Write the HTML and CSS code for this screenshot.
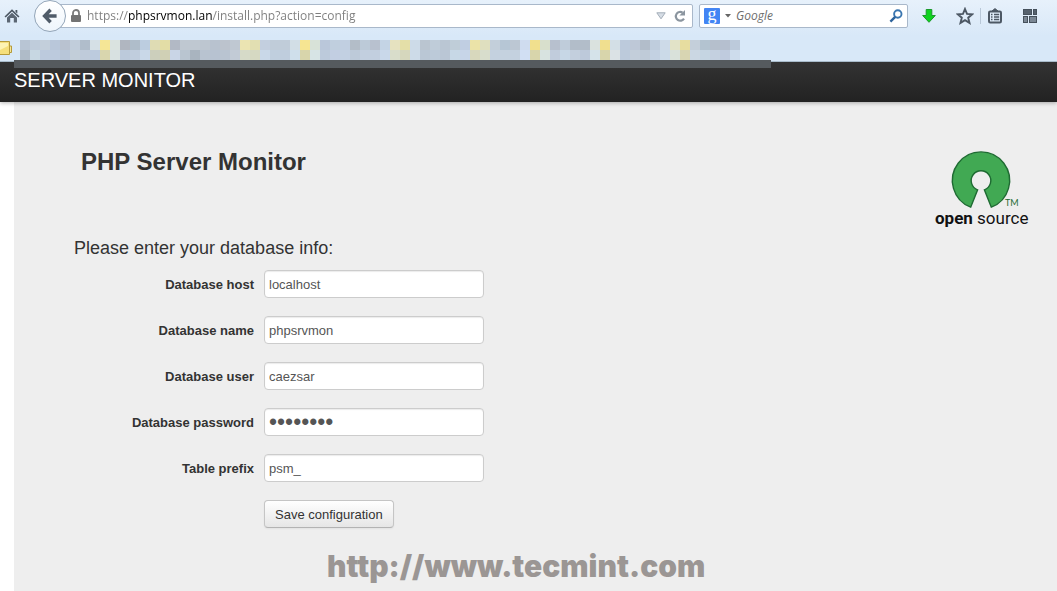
FILE: index.html
```html
<!DOCTYPE html>
<html lang="en">
<head>
  <meta charset="UTF-8">
  <title>SERVER MONITOR</title>
  <link rel="stylesheet" href="styles.css">
</head>
<body>

  <header class="browser">
    <div class="toolbar">
      <button class="icon-btn home" aria-label="Home">
        <svg width="16" height="16" viewBox="0 0 16 16">
          <path d="M0.5 8.5L8 1.2L15.5 8.5L14.3 9.6L8 3.6L1.7 9.6Z" fill="#4c5763"/>
          <path d="M3 9.4L8 4.8L13 9.4V14.5H9.8V10H6.2V14.5H3Z" fill="#5b6673"/>
          <path d="M11.5 2H13.3V5.5L11.5 4Z" fill="#4c5763"/>
        </svg>
      </button>
      <button class="back" aria-label="Back">
        <svg width="16" height="16" viewBox="0 0 16 16">
          <path d="M8.6 1.8L2.6 8L8.6 14.2M3 8H14.6" fill="none" stroke="#4f5b69" stroke-width="3.4"/>
        </svg>
      </button>
      <div class="address">
        <svg width="12" height="14" viewBox="0 0 12 14">
          <path d="M3 7V4a3 3 0 0 1 6 0V7" fill="none" stroke="#7b7b7b" stroke-width="1.8"/>
          <rect x="1" y="6" width="10" height="7" rx="1" fill="#737373"/>
        </svg>
        <input class="url" type="text" aria-label="Address" value="https://phpsrvmon.lan/install.php?action=config">
        <svg width="10" height="8" viewBox="0 0 10 8">
          <path d="M0.8 0.8H9.2L5 6.8Z" fill="#d6dde5" stroke="#a3adb8"/>
        </svg>
        <button class="icon-btn" aria-label="Reload">
          <svg width="14" height="14" viewBox="0 0 14 14">
            <path d="M11 9.6A4.4 4.4 0 1 1 9.6 3.6" fill="none" stroke="#8b959f" stroke-width="2.2"/>
            <path d="M12 1V6.6H6.4Z" fill="#8b959f"/>
          </svg>
        </button>
      </div>
      <div class="search">
        <span class="engine">g</span>
        <svg width="6" height="4" viewBox="0 0 6 4"><path d="M0 0H6L3 3.5Z" fill="#666"/></svg>
        <input class="query" type="text" aria-label="Search" placeholder="Google">
        <button class="icon-btn" aria-label="Go">
          <svg width="14" height="14" viewBox="0 0 14 14">
            <circle cx="8.8" cy="5" r="3.7" fill="none" stroke="#3a76b0" stroke-width="1.9"/>
            <path d="M6.2 7.8L1.4 12.6" stroke="#2d639c" stroke-width="2.4"/>
          </svg>
        </button>
      </div>
      <div class="tools">
        <button class="icon-btn" aria-label="Downloads">
          <svg width="16" height="16" viewBox="0 0 16 16">
            <path d="M5.2 1.5H10.8V7.5H14.3L8 14.3L1.7 7.5H5.2Z" fill="#0fd31f" stroke="#1c9a2c"/>
          </svg>
        </button>
        <button class="icon-btn star" aria-label="Bookmark">
          <svg width="18" height="18" viewBox="0 0 18 18">
            <path d="M9 2L11 6.9L16.2 7.3L12.2 10.7L13.5 15.9L9 13.1L4.5 15.9L5.8 10.7L1.8 7.3L7 6.9Z" fill="none" stroke="#4d5864" stroke-width="1.9"/>
          </svg>
        </button>
        <button class="icon-btn list" aria-label="Bookmarks">
          <svg width="16" height="16" viewBox="0 0 16 16">
            <rect x="2" y="3.5" width="12" height="11" rx="1.2" fill="none" stroke="#4d5864" stroke-width="2"/>
            <path d="M5 3L8 0.6L11 3Z" fill="#4d5864" stroke="#4d5864"/>
            <path d="M4 6.5H5.5M4 9H5.5M4 11.5H5.5M7 6.5H12.2M7 9H12.2M7 11.5H12.2" stroke="#4d5864" stroke-width="1.4"/>
          </svg>
        </button>
        <button class="icon-btn tiles" aria-label="Tab groups">
          <svg width="16" height="16" viewBox="0 0 16 16" stroke="#46515c">
            <rect x="1.5" y="1.5" width="8" height="5" fill="#56616d"/>
            <rect x="11.5" y="1.5" width="3" height="5" fill="#56616d"/>
            <rect x="1.5" y="8.5" width="4" height="6" fill="#7b8794"/>
            <rect x="7.5" y="8.5" width="7" height="6" fill="#7b8794"/>
          </svg>
        </button>
      </div>
    </div>
    <div class="bookmarks">
      <svg class="folder" width="14" height="18" viewBox="0 0 14 18">
        <path d="M9 6H11.5V12.5H9Z" fill="#f6e79a" stroke="#b59a3b"/>
        <path d="M-1 1.5H9.5V14.5H-1Z" fill="#f5df7c" stroke="#b59a3b"/>
        <path d="M0 3H8V6L0 10Z" fill="#fdf3b4"/>
      </svg>
      <div class="mosaic" id="mosaic">
        <!-- Tiles go here -->
      </div>
      <div class="strip"></div>
    </div>
  </header>

  <nav class="navbar">
    <a class="brand" href="#">SERVER MONITOR</a>
  </nav>

  <main class="content">
    <div class="page-header">
      <h1>PHP Server Monitor</h1>
      <svg class="logo" width="96" height="83" viewBox="0 0 96 83" role="img" aria-label="open source">
        <path d="M37.7 61.2A28.6 28.6 0 1 1 58.3 61.2L51.4 43.8A9.8 9.8 0 1 0 44.6 43.8Z" fill="#41a953" stroke="#1e6b32" stroke-width="1.4"/>
        <text class="logo-tm" x="72" y="60">TM</text>
        <text class="logo-text" x="2" y="78"><tspan class="logo-open">open</tspan> source</text>
      </svg>
    </div>

    <form class="config">
      <h2>Please enter your database info:</h2>
      <div class="row">
        <label for="host">Database host</label>
        <input type="text" id="host" value="localhost">
      </div>
      <div class="row">
        <label for="name">Database name</label>
        <input type="text" id="name" value="phpsrvmon">
      </div>
      <div class="row">
        <label for="user">Database user</label>
        <input type="text" id="user" value="caezsar">
      </div>
      <div class="row">
        <label for="pass">Database password</label>
        <input type="password" id="pass" value="password">
      </div>
      <div class="row">
        <label for="prefix">Table prefix</label>
        <input type="text" id="prefix" value="psm_">
      </div>
      <button class="save" type="submit">Save configuration</button>
    </form>

    <p class="watermark">http://www.tecmint.com</p>
  </main>

  <script>
    // two rows of tiles, left to right
    const rows = [
      'b8c5d4 bfccdb c3cfdb b9c7da b9c2d0 c1cddb b0bdcb d5e0e6 f5e696 dae3e0 b0b6c0 afbdca bccde0 dfdcb4 e3dda6 b2b9c5 bfc8d1 bfc8d1 bdc6d0 b8c2cf bcc3cd bfc8d2 ebe4b2 e2dfb2 c3cfdf c0ccd9 c0ccd9 d2dee6 f6e592 d8e2d8 bac7da c0cfde c1cfe1 b3bdc8 bccad8 b8c1cf c4d4e5 e6e2c0 e4dfa8 cddbe8 bac5d0 bfccd9 bac6d3 bfcdd8 c0cee2 ebe3a8 dfdfbf c3cfda b6c6d5 bcc7d3 cfdcef f1e08e d8dfcc b7c0ce bfccda b2bdc9 b2bdc9 dae2df f0df8f d3dfe6 bccadc bec8d7 b2bdca bfcddd cddae8 e2e3c8 e7dda0 c4cfda b3c3d0 b5bfcc b5bfcf bccadb',
      'afbbc8 c7d7e2 bccadd bccadd b8c6d8 c2ced9 bfcbda bccbde d9d6ae d8e1e1 bccadb c0cddd c9d8e8 cccfbc d0d0b5 c9d5e6 b9c5d0 a9b4bf b8c3d0 b7c2d1 b9c4d1 c2cbd6 d6dac8 d6d9c2 c9d8e8 c0cfde bfcddd cfdfeb d8d5ab d7e4e5 bccadb c2cee2 c2d0e2 bdcad9 c2cfdf c2cfdf c9d8ea d9ddcb d6d7bd cddbe8 bac7d5 bccad9 bac6d5 c7d8e6 c7d5e8 d8d8bd d8ddcc c4d1df c5d2df c4d1df d1dff3 d8d5ab d8e3e0 c1ccdc c7d7e6 c3cfdd bdc9da d5e3ea d8d5ab dbe2e5 bccadb c3ceda bfcbd8 c3d1e2 cbdae8 d9e1da d8d5b2 cbd7e3 c5d5e2 c4d0e0 bfcbde cddcec'
    ];

    const mosaic = document.getElementById('mosaic');
    rows.join(' ').split(' ').forEach(color => {
      const tile = document.createElement('span');
      tile.style.background = `#${color}`;
      mosaic.appendChild(tile);
    });
  </script>

</body>
</html>
```
FILE: styles.css
```css
* {
  box-sizing: border-box;
}

body {
  margin: 0;
  min-height: 100vh;
  display: flex;
  flex-direction: column;
  font-family: "Liberation Sans", Arial, sans-serif;
  font-size: 13px;
  line-height: 20px;
  color: #333;
  background: #fff;
}

button, input {
  font-family: inherit;
  font-size: inherit;
}

/* Browser */
.browser {
  position: relative;
  z-index: 2;
  background: linear-gradient(#e7f1fb, #d8e8f8 36px);
  border-bottom: 1px solid #a9bccb;
}

.toolbar {
  display: flex;
  align-items: center;
  height: 31px;
}

.icon-btn {
  display: flex;
  padding: 0;
  border: 0;
  background: none;
}

.home {
  margin: 0 14px 0 4px;
}

.back {
  display: flex;
  align-items: center;
  justify-content: center;
  flex: none;
  width: 32px;
  height: 32px;
  padding: 0;
  border: 1px solid #93a5b8;
  border-radius: 50%;
  background: linear-gradient(#fff, #eef5fc);
  z-index: 1;
}

.address, .search {
  display: flex;
  align-items: center;
  height: 24px;
  border: 1px solid #a9b8ca;
  border-radius: 2px;
  background: #fff;
}

.address {
  flex: 1;
  gap: 7px;
  margin-left: -8px;
  padding: 0 5px 0 11px;
}

.url, .query {
  flex: 1;
  min-width: 0;
  padding: 0;
  border: 0;
  outline: 0;
  background: none;
  font: 12px "Open Sans", sans-serif;
}

/* the host part is darker than the rest */
.url {
  margin-left: -2px;
  color: transparent;
  background: linear-gradient(90deg, #7d7d7d 41px, #000 41px, #000 125px, #7d7d7d 125px);
  background-clip: text;
  -webkit-background-clip: text;
}

.search {
  gap: 5px;
  width: 209px;
  margin-left: 6px;
  padding: 0 4px;
}

.engine {
  width: 16px;
  height: 16px;
  border-radius: 1px;
  background: #4285f4;
  color: #fff;
  font: 18px/12px "Liberation Serif", serif;
  text-align: center;
}

.query {
  font-style: italic;
}

.query::placeholder {
  color: #6d6d6d;
}

.tools {
  display: flex;
  align-items: center;
  padding: 0 19px 0 13px;
}

.star {
  margin-left: 19px;
}

.list {
  margin-left: 6px;
  padding-left: 6px;
  border-left: 1px solid #b9c8d8;
}

.tiles {
  margin-left: 19px;
}

.bookmarks {
  position: relative;
  display: flex;
  height: 30px;
  padding-top: 9px;
}

.folder {
  margin-right: 6px;
}

.mosaic {
  display: grid;
  grid-template-columns: repeat(72, 10px);
  grid-auto-rows: 10px;
}

.strip {
  position: absolute;
  top: 29px;
  left: 14px;
  width: 757px;
  height: 8px;
  background: #555a5e;
}

/* Page */
.navbar {
  position: relative;
  z-index: 1;
  height: 40px;
  padding: 8px 14px;
  background: linear-gradient(#333, #222);
  box-shadow: 0 1px 4px rgba(0, 0, 0, 0.3);
}

.brand {
  color: #fff;
  font-size: 20px;
  text-decoration: none;
}

.content {
  flex: 1;
  margin-left: 14px;
  padding: 44px 28px 0 60px;
  background: #eee;
}

.page-header {
  display: flex;
  justify-content: space-between;
  padding-left: 7px;
}

h1 {
  margin: 0;
  font-size: 24px;
  line-height: 32px;
}

.logo-tm {
  font: 9px Lato, sans-serif;
  fill: #1e6b32;
}

.logo-text {
  font: 17px Roboto, sans-serif;
  fill: #111;
}

.logo-open {
  font-weight: 700;
}

h2 {
  margin: 0 0 2px;
  font-size: 18px;
  font-weight: 400;
  line-height: 39px;
}

.row {
  display: flex;
  align-items: center;
  gap: 10px;
  margin-bottom: 18px;
}

.row label {
  width: 180px;
  padding-top: 2px;
  font-weight: 700;
  text-align: right;
}

.row input {
  width: 220px;
  height: 28px;
  padding: 4px;
  border: 1px solid #ccc;
  border-radius: 4px;
  background: #fff;
  box-shadow: inset 0 1px 1px rgba(0, 0, 0, 0.08);
  color: #555;
}

.row input[type="password"] {
  padding: 0 4px;
  font-size: 23px;
}

.save {
  display: block;
  height: 28px;
  margin-left: 190px;
  padding: 0 10px;
  border: 1px solid #c5c5c5;
  border-bottom-color: #b3b3b3;
  border-radius: 4px;
  background: linear-gradient(#fff, #e6e6e6);
  box-shadow: 0 1px 2px rgba(0, 0, 0, 0.05);
  color: #333;
}

.watermark {
  margin: 18px 0 0 253px;
  color: #9b9694;
  font: 900 30px/40px Inter, sans-serif;
}
```
